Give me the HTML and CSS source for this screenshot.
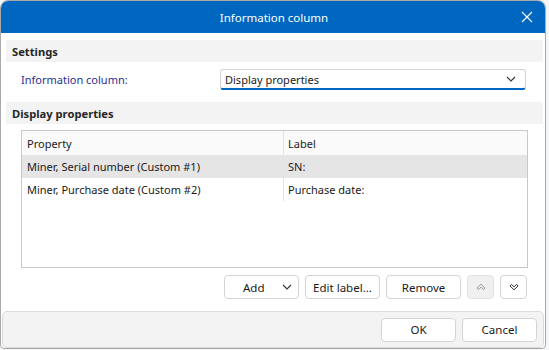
FILE: index.html
```html
<!DOCTYPE html>
<html lang="en">
<head>
  <meta charset="UTF-8" />
  <title>Information column</title>
  <link rel="stylesheet" href="styles.css">
</head>
<body>
  <div class="window">
    <div class="titlebar">
      <span class="title">Information column</span>
      <button class="close" aria-label="Close">
        <svg width="12" height="12" viewBox="0 0 12 12"><path d="M1 1L11 11M11 1L1 11" stroke="#fff" stroke-width="1.1" fill="none"/></svg>
      </button>
    </div>

    <div class="content">
      <div class="section-head">Settings</div>
      <div class="field-row">
        <label class="field-label">Information column:</label>
        <div class="combo">
          <span>Display properties</span>
          <svg width="10" height="6" viewBox="0 0 10 6"><path d="M1 1L5 5L9 1" stroke="#333" stroke-width="1.1" fill="none"/></svg>
        </div>
      </div>

      <div class="section-head">Display properties</div>
      <div class="grid">
        <div class="grid-row head">
          <div class="cell prop">Property</div>
          <div class="cell lbl">Label</div>
        </div>
        <div class="grid-row selected">
          <div class="cell prop">Miner, Serial number (Custom #1)</div>
          <div class="cell lbl">SN:</div>
        </div>
        <div class="grid-row">
          <div class="cell prop">Miner, Purchase date (Custom #2)</div>
          <div class="cell lbl">Purchase date:</div>
        </div>
      </div>

      <div class="actions">
        <button class="btn split">
          <span>Add</span>
          <svg width="10" height="6" viewBox="0 0 10 6"><path d="M1 1L5 5L9 1" stroke="#333" stroke-width="1.1" fill="none"/></svg>
        </button>
        <button class="btn">Edit label...</button>
        <button class="btn">Remove</button>
        <button class="btn icon" disabled>
          <svg width="10" height="8" viewBox="0 0 10 8"><path d="M1 5L5 1.2L9 5L7.6 6.6L5 4.2L2.4 6.6Z" stroke="#9a9a9a" stroke-width="1" fill="none" stroke-linejoin="round"/></svg>
        </button>
        <button class="btn icon">
          <svg width="10" height="8" viewBox="0 0 10 8"><path d="M1 3L5 6.8L9 3L7.6 1.4L5 3.8L2.4 1.4Z" stroke="#333" stroke-width="1" fill="none" stroke-linejoin="round"/></svg>
        </button>
      </div>
    </div>

    <div class="footer">
      <button class="btn wide">OK</button>
      <button class="btn wide">Cancel</button>
    </div>
  </div>
</body>
</html>
```

FILE: styles.css
```css
body {
  margin: 0;
  background-color: #f4f6f8;
  font-family: 'Noto Sans', 'Open Sans', sans-serif;
  font-size: 11px;
  color: #1a1a1a;
}
.window {
  width: 544px;
  height: 347px;
  background-color: #fff;
  border: 1px solid #a9a9a9;
  border-radius: 8px 8px 4px 4px;
  overflow: hidden;
  display: flex;
  flex-direction: column;
}
.titlebar {
  height: 32px;
  flex: none;
  background-color: #0067c0;
  color: #fff;
  display: flex;
  align-items: center;
  justify-content: center;
  position: relative;
}
.title {
  font-size: 11.5px;
  margin-left: 2px;
}
.close {
  position: absolute;
  right: 12px;
  top: 10px;
  width: 12px;
  height: 12px;
  padding: 0;
  border: none;
  background: none;
  display: flex;
}
.content {
  flex: 1;
  padding: 7px 2px 0 5px;
  display: flex;
  flex-direction: column;
}
.section-head {
  height: 22px;
  line-height: 23px;
  background-color: #f3f3f3;
  padding-left: 6px;
  font-weight: bold;
  font-size: 11.2px;
  color: #262626;
}
.field-row {
  display: flex;
  align-items: center;
  height: 21px;
  margin: 7px 0 12px 0;
}
.field-label {
  width: 199px;
  padding-left: 15px;
  color: #2b2f8f;
}
.combo {
  width: 291px;
  height: 18px;
  border: 1px solid #d4d4d4;
  border-bottom: 2px solid #0067c0;
  border-radius: 3px;
  padding: 0 9px 0 4px;
  display: flex;
  align-items: center;
  justify-content: space-between;
}
.grid {
  margin: 6px 15px 0 15px;
  height: 136px;
  border: 1px solid #c8c8c8;
}
.grid-row {
  display: flex;
  height: 23px;
}
.grid-row.head {
  height: 24px;
  background-color: #fafafa;
}
.grid-row.selected {
  background-color: #e5e5e5;
}
.cell {
  display: flex;
  align-items: center;
}
.cell.prop {
  width: 256px;
  padding-left: 5px;
  border-right: 1px solid #e3e3e3;
}
.cell.lbl {
  padding-left: 4px;
}
.actions {
  display: flex;
  justify-content: flex-end;
  gap: 6px;
  margin: 7px 16px 0 0;
}
.btn {
  height: 24px;
  width: 75px;
  border: 1px solid #d4d4d4;
  border-radius: 4px;
  background-color: #fff;
  font-family: inherit;
  font-size: 11.5px;
  color: #1a1a1a;
  padding: 0;
  display: flex;
  align-items: center;
  justify-content: center;
}
.btn.split {
  justify-content: space-between;
  padding: 0 6px 0 18px;
}
.btn.icon {
  width: 27px;
}
.btn:disabled {
  background-color: #f0f0f0;
  border-color: #e3e3e3;
}
.footer {
  height: 35px;
  flex: none;
  margin: 0 1px 0 1px;
  background-color: #f3f3f3;
  border: 1px solid #dadada;
  border-radius: 5px;
  display: flex;
  justify-content: flex-end;
  align-items: center;
  gap: 6px;
  padding-right: 6px;
}
```
